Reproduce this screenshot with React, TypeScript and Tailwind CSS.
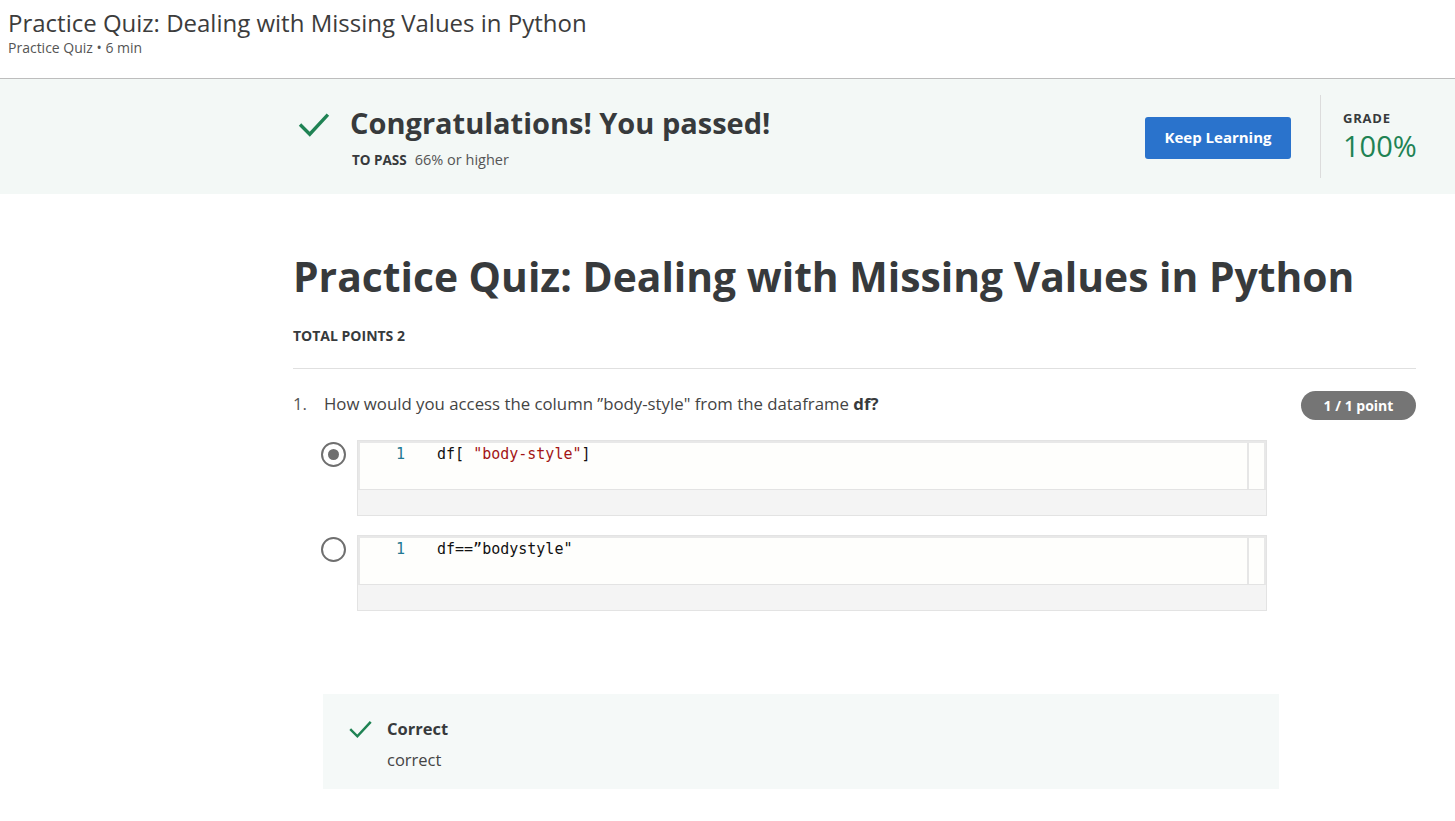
const sans = "font-['Open_Sans',_'Noto_Sans',_sans-serif]";

function Check({ className }: { className: string }) {
  return (
    <svg className={className} viewBox="0 0 24 24" fill="none" stroke="currentColor" strokeWidth={2.4} strokeLinecap="square">
      <path d="M3 12.5l6 6L21 5.5" />
    </svg>
  );
}

function CodeOption({ selected, children }: { selected: boolean; children: React.ReactNode }) {
  return (
    <div className="flex items-start gap-[11px]">
      <div className="mt-[2px] flex h-[25px] w-[25px] items-center justify-center rounded-full border-[2.5px] border-[#6f6f6f] bg-white">
        {selected && <div className="h-[11px] w-[11px] rounded-full bg-[#6f6f6f]" />}
      </div>
      <div className="w-[910px] border border-[#e3e3e3]">
        <div className="flex h-[49px] border-2 border-b border-[#e8e8e8] border-b-[#e3e3e3] bg-[#fefefc]">
          <div className="flex flex-1 font-['DejaVu_Sans_Mono',_monospace] text-[15px] leading-[22px]">
            <span className="w-[45px] text-right text-[#237893]">1</span>
            <span className="pl-[32px] text-[#111]">{children}</span>
          </div>
          <div className="w-[17px] border-l-2 border-[#e6e6e6]" />
        </div>
        <div className="h-[25px] bg-[#f4f4f4]" />
      </div>
    </div>
  );
}

export default function App() {
  return (
    <div className={`min-h-screen bg-white text-[#373a3c] ${sans}`}>
      <header className="h-[79px] border-b border-[#bdbdbd] px-2 pt-[8px]">
        <h1 className="text-[24px] leading-[30px] text-[#3c3c3c]">Practice Quiz: Dealing with Missing Values in Python</h1>
        <p className="text-[14px] leading-[20px] text-[#555]">Practice Quiz • 6 min</p>
      </header>

      <section className="h-[115px] bg-[#f3f8f6]">
        <div className="ml-[293px] flex h-full w-[1123px] items-center">
          <div className="flex flex-1 items-start gap-[19px] pl-[4px]">
            <Check className="mt-[4px] h-[34px] w-[34px] text-[#1f8354]" />
            <div>
              <h2 className="text-[29px] font-bold leading-[38px] text-[#373a3c]">Congratulations! You passed!</h2>
              <p className="mt-[8px] pl-[2px] text-[14.5px] leading-[20px] text-[#555]">
                <span className="mr-[8px] text-[13.5px] font-bold text-[#373a3c]">TO PASS</span>66% or higher
              </p>
            </div>
          </div>
          <button className="mt-[2px] h-[42px] w-[146px] rounded-[3px] bg-[#2a73cc] text-[15px] font-bold text-white">Keep Learning</button>
          <div className="ml-[29px] h-[83px] border-l border-[#dcdcdc]" />
          <div className="ml-[22px] flex w-[73px] flex-col gap-[4px] pb-[4px]">
            <div className="text-[13px] font-bold leading-[18px] tracking-[0.06em] text-[#373a3c]">GRADE</div>
            <div className="text-[29px] leading-[30px] text-[#1f8354]">100%</div>
          </div>
        </div>
      </section>

      <main className="ml-[293px] w-[1123px] pt-[54px]">
        <h1 className="text-[40.8px] font-bold leading-[56px] text-[#373a3c]">Practice Quiz: Dealing with Missing Values in Python</h1>
        <p className="mt-[22px] text-[14px] font-bold leading-[20px] text-[#373a3c]">TOTAL POINTS 2</p>
        <hr className="mt-[22px] border-[#e0e0e0]" />

        <div className="mt-[22px] flex items-start">
          <span className="w-[31px] text-[16.8px] leading-[26px] text-[#555]">1.</span>
          <p className="flex-1 text-[16.8px] leading-[26px] text-[#444]">
            How would you access the column ”body-style" from the dataframe <b className="text-[#373a3c]">df?</b>
          </p>
          <span className="flex h-[29px] w-[115px] items-center justify-center rounded-full bg-[#757575] text-[14px] font-bold text-white">1 / 1 point</span>
        </div>

        <div className="mt-[20px] flex flex-col gap-[19px] pl-[28px]">
          <CodeOption selected>
            df[ <span className="text-[#a31515]">"body-style"</span>]
          </CodeOption>
          <CodeOption selected={false}>df==”bodystyle"</CodeOption>
        </div>

        <div className="ml-[30px] mt-[83px] flex h-[95px] w-[956px] items-start gap-[14px] bg-[#f5f9f8] pl-[25px] pt-[22px]">
          <Check className="mt-[1px] h-[25px] w-[25px] text-[#1f8354]" />
          <div>
            <p className="text-[16.5px] font-bold leading-[26px] text-[#373a3c]">Correct</p>
            <p className="mt-[5px] text-[16.5px] leading-[26px] text-[#444]">correct</p>
          </div>
        </div>
      </main>
    </div>
  );
}
